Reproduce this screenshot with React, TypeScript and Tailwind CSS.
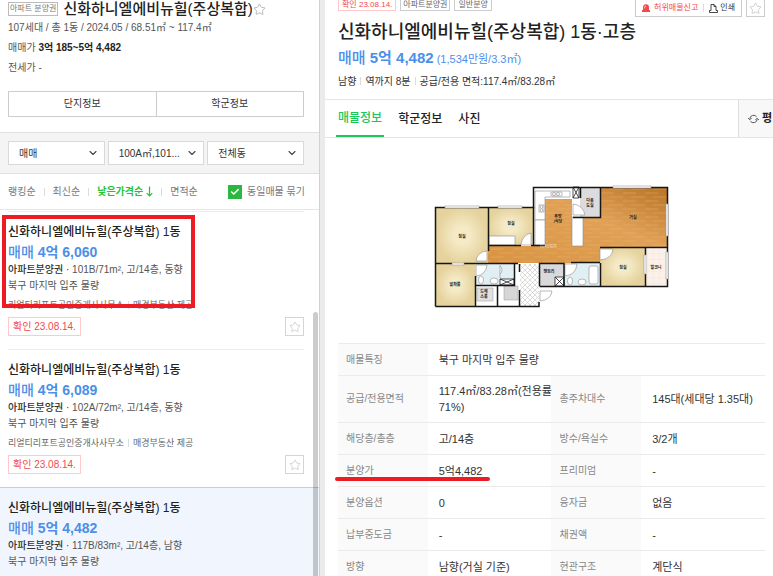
import React from 'react';
import { Star, ChevronDown, Check } from 'lucide-react';

interface Listing {
  id: string;
  price: string;
  spec: string;
  highlighted?: boolean;
  selected?: boolean;
}

const complexName = '신화하니엘에비뉴힐(주상복합)';

const listings: Listing[] = [
  { id: 'a', price: '4억 6,060', spec: '101B/71m², 고/14층, 동향', highlighted: true },
  { id: 'b', price: '4억 6,089', spec: '102A/72m², 고/14층, 동향' },
  { id: 'c', price: '5억 4,482', spec: '117B/83m², 고/14층, 남향', selected: true },
];

const detailRows: [string, string, string, string][] = [
  ['해당층/총층', '고/14층', '방수/욕실수', '3/2개'],
  ['분양가', '5억4,482', '프리미엄', '-'],
  ['분양옵션', '0', '융자금', '없음'],
  ['납부중도금', '-', '채권액', '-'],
  ['방향', '남향(거실 기준)', '현관구조', '계단식'],
];

const Divider: React.FC = () => <span className="h-2 w-px bg-[#dcdcdc]" />;

const FilterSelect: React.FC<{ label: string; value: string }> = ({ label, value }) => (
  <div className="relative flex-1">
    <select
      aria-label={label}
      className="block h-6 w-full appearance-none rounded-none border border-[#d9d9d9] bg-white pl-[10px] text-[10px] text-[#333]"
    >
      <option>{value}</option>
    </select>
    <ChevronDown size={12} strokeWidth={2.2} className="pointer-events-none absolute right-[6px] top-[6px] text-[#444]" />
  </div>
);

const ComplexHeader: React.FC = () => (
  <header className="pb-[15px] pl-2 pr-[15px] text-[10px] leading-5 text-[#555]">
    <div className="flex h-[18px] items-center">
      <span className="flex h-[14px] items-center border border-[#bbb] px-px text-[8px] text-[#777]">아파트 분양권</span>
      <h1 className="ml-[5px] text-[15px] font-medium text-[#222]">{complexName}</h1>
      <button aria-label="관심단지">
        <Star size={13} strokeWidth={1.5} className="text-[#aaa]" />
      </button>
    </div>
    <p>107세대 / 총 1동 / 2024.05 / 68.51㎡ ~ 117.4㎡</p>
    <p>
      매매가 <strong className="text-[#222]">3억 185~5억 4,482</strong>
    </p>
    <p>전세가 -</p>
    <div className="mt-[13px] flex h-[26px] border border-[#ccc] text-[#333]">
      <button className="flex-1 border-r border-[#ccc]">단지정보</button>
      <button className="flex-1">학군정보</button>
    </div>
  </header>
);

const SortBar: React.FC = () => (
  <div className="flex h-9 items-center gap-2 border-b border-[#e5e5e5] pl-2 pr-[14px] text-[10px] text-[#777]">
    <button>랭킹순</button>
    <Divider />
    <button>최신순</button>
    <Divider />
    <button className="flex items-center gap-[3px] font-bold text-[#1ec531]">
      낮은가격순
      <svg width="7" height="11" viewBox="0 0 7 11" fill="none" stroke="currentColor" strokeWidth="1.2">
        <path d="M3.5 0.5V10M0.7 7.2L3.5 10L6.3 7.2" />
      </svg>
    </button>
    <Divider />
    <button>면적순</button>
    <label className="ml-auto flex items-center gap-[5px]">
      <span className="relative size-[14px]">
        <input type="checkbox" defaultChecked className="block size-[14px] appearance-none bg-[#2db742]" />
        <Check size={10} strokeWidth={3.5} className="pointer-events-none absolute left-[2px] top-[2px] text-white" />
      </span>
      동일매물 묶기
    </label>
  </div>
);

const ListingCard: React.FC<{ listing: Listing }> = ({ listing }) => (
  <li className={listing.selected ? 'relative border-t border-[#b9d2ec] bg-[#f1f6fe]' : 'relative'}>
    <div className={listing.selected ? 'pl-2 pr-[15px]' : 'ml-2 mr-[15px] border-t border-[#ececec]'}>
      <h3 className="pt-[10px] text-[12px] font-medium leading-5 text-[#222]">{complexName} 1동</h3>
      <p className="text-[14px] font-bold leading-5 text-[#4b8fe8]">
        <span className="font-medium">매매</span> {listing.price}
      </p>
      <p className="text-[10px] leading-4 text-[#555]">
        <span className="font-medium text-[#333]">아파트분양권 ·</span> {listing.spec}
      </p>
      <p className="text-[10px] leading-4 text-[#555]">북구 마지막 입주 물량</p>
      <p className="mt-[3px] flex items-center gap-1 text-[9px] leading-4 text-[#666]">
        리얼티리포트공인중개사사무소
        <Divider />
        매경부동산 제공
      </p>
      <div className="mt-1 flex items-center justify-between pb-[13px]">
        <span className="flex h-[19px] items-center border border-[#ffc9cb] px-1 text-[10px] text-[#f5484e]">확인 23.08.14.</span>
        <button aria-label="관심매물" className="flex size-[19px] items-center justify-center border border-[#d5d5d5] bg-white">
          <Star size={12} strokeWidth={1.5} className="text-[#c4c4c4]" />
        </button>
      </div>
    </div>
    {listing.highlighted && (
      <div className="pointer-events-none absolute left-[2px] top-1 h-[93px] w-[193px] border-4 border-[#ed1c24]" />
    )}
  </li>
);

const FloorPlan: React.FC = () => (
  <svg viewBox="1 0 252 140" className="mx-auto block w-[252px]" role="img" aria-label="평면도">
    <defs>
      <radialGradient id="room">
        <stop offset="0.3" stopColor="#f5eac6" />
        <stop offset="1" stopColor="#e5d29c" />
      </radialGradient>
      <linearGradient id="wood" x1="0" y1="1" x2="1" y2="0">
        <stop offset="0" stopColor="#d99442" />
        <stop offset="0.6" stopColor="#e0a157" />
        <stop offset="1" stopColor="#b87327" />
      </linearGradient>
      <pattern id="planks" width="22" height="8" patternUnits="userSpaceOnUse">
        <path d="M0 2H13M8 6H22" stroke="#f0bd78" strokeWidth="0.7" opacity="0.5" />
      </pattern>
      <pattern id="tiles" width="5" height="5" patternUnits="userSpaceOnUse">
        <rect width="5" height="5" fill="#fff" />
        <path d="M0 0L5 5M5 0L0 5" stroke="#c4c4c4" strokeWidth="0.6" />
      </pattern>
      <pattern id="balcony" width="6" height="6" patternUnits="userSpaceOnUse">
        <rect width="6" height="6" fill="#fbf1e8" />
        <path d="M0 0H6M0 0V6" stroke="#eadfd4" strokeWidth="0.6" />
      </pattern>
    </defs>

    {/* floors */}
    <rect x="11" y="32" width="52" height="57" fill="url(#room)" />
    <rect x="11" y="89" width="39" height="42" fill="url(#room)" />
    <rect x="63" y="32" width="45" height="38" fill="url(#room)" />
    <rect x="175" y="72" width="45" height="39" fill="url(#room)" />
    <rect x="220" y="74" width="22" height="37" fill="url(#balcony)" />
    <rect x="108" y="12" width="47" height="59" fill="#fff" />
    <path d="M63 71H120V24H147V42H175V12H242V72H175V88H63Z" fill="url(#wood)" />
    <path d="M63 71H120V24H147V42H175V12H242V72H175V88H63Z" fill="url(#planks)" />
    <rect x="155" y="12" width="20" height="30" fill="#dcdcde" />
    <rect x="50" y="89" width="39" height="21" fill="#dfeff3" />
    <rect x="139" y="88" width="36" height="23" fill="#dfeff3" />
    <rect x="95" y="89" width="19" height="42" fill="url(#tiles)" />
    <rect x="115" y="88" width="24" height="23" fill="#d9d9db" />
    <rect x="50" y="111" width="22" height="20" fill="#fff" />
    <rect x="52" y="113" width="16" height="13" fill="#e1e1e1" stroke="#999" strokeWidth="0.5" />
    <rect x="79" y="111" width="14" height="14" fill="#d6d6d8" stroke="#999" strokeWidth="0.5" />

    {/* fixtures and doors */}
    <g fill="#fff" stroke="#8b8b8b" strokeWidth="0.6">
      <rect x="147" y="42" width="11" height="29" />
      <rect x="64" y="61" width="26" height="9" />
      <path d="M110 16H145V22H120V45H110Z" />
      <path d="M110 45H120V70H110Z" />
      <rect x="126" y="17" width="11" height="4" rx="1" />
      <circle cx="129" cy="19" r="1.5" />
      <circle cx="133" cy="19" r="1.5" />
      <rect x="114" y="30" width="5" height="7" />
      <circle cx="116.5" cy="32" r="1.4" />
      <circle cx="116.5" cy="35" r="1.4" />
      <path d="M62 86V76Q52 77 51 86Z" />
      <path d="M106 70V58Q97 60 96 70Z" />
      <path d="M148 29V40H160Q158 30 148 29Z" />
      <path d="M175 74H188Q187 84 175 85Z" />
      <path d="M51 90H62Q61 100 51 101Z" />
      <path d="M140 89H152Q151 100 140 101Z" />
      <path d="M115 116H127Q126 125 115 126Z" />
      <path d="M75 90V103M75 91Q79 95 75 99" />
      <ellipse cx="56" cy="105" rx="2.5" ry="4" />
      <ellipse cx="69" cy="106" rx="4" ry="3" />
      <ellipse cx="145" cy="106" rx="2.5" ry="4" />
      <ellipse cx="157" cy="107" rx="4" ry="3" />
      <rect x="164" y="91" width="9" height="18" rx="2" />
    </g>
    <g fill="#fff" stroke="#222" strokeWidth="0.8">
      <path d="M148 12H154V23H148ZL154 23M154 12L148 23" />
      <path d="M75 104H89V110H75ZL89 110M89 104L75 110" />
      <path d="M130 102H139V111H130ZL139 111M139 102L130 111" />
    </g>

    {/* walls */}
    <g fill="none" stroke="#161616" strokeWidth="1.5">
      <path d="M10.5 131.5V32.5H108.5V12.5H242.5V111.5H114.5" />
      <path d="M10.5 131.5H114V127M114.5 111V88" />
      <path d="M10.5 88.5H27M39 88.5H93M63.5 32V76M63 70.5H96M106 70.5H120M108.5 32V70" />
      <path d="M50.5 101V131M50 110.5H89.5V88M72.5 111V131M94.5 89V97M94.5 115V131" />
      <path d="M155.5 12V23M155 42.5H175.5V12M158 42.5H148" />
      <path d="M175.5 88V111M175 72.5H242M220.5 73V80M220.5 99V111M114 88.5H139V111M146 87.5H175" />
    </g>
    <g fill="#fff" stroke="#999" strokeWidth="0.6">
      <rect x="20" y="31" width="34" height="2" />
      <rect x="73" y="31" width="24" height="2" />
      <rect x="188" y="11" width="38" height="2" />
      <rect x="241" y="29" width="2" height="32" />
      <rect x="241" y="77" width="2" height="27" />
      <rect x="219" y="80" width="2" height="19" />
      <rect x="27" y="88" width="12" height="2" />
    </g>

    <text x="115" y="73" fontSize="5" fill="#fff" opacity="0.5">NAVER</text>
    <g fontSize="4" fontWeight="700" fill="#222" textAnchor="middle">
      <text x="37" y="63">침실</text>
      <text x="86" y="50">침실</text>
      <text x="30" y="111">알파룸</text>
      <text x="59" y="118">드레</text>
      <text x="59" y="123">스룸</text>
      <text x="133" y="43">주방</text>
      <text x="133" y="48">/식당</text>
      <text x="165" y="27">다용</text>
      <text x="165" y="32">도실</text>
      <text x="208" y="44">거실</text>
      <text x="124" y="98">팬트리</text>
      <text x="198" y="94">침실</text>
      <text x="231" y="94">발코니</text>
    </g>
  </svg>
);

const LabelCell: React.FC<{ children: React.ReactNode }> = ({ children }) => (
  <th scope="row" className="bg-[#fafafa] pl-2 text-left text-[10px] font-normal text-[#888]">{children}</th>
);

const ValueCell: React.FC<{ children: React.ReactNode; colSpan?: number }> = ({ children, colSpan }) => (
  <td colSpan={colSpan} className="whitespace-nowrap pl-[11px] text-[#333]">{children}</td>
);

const DetailTable: React.FC = () => (
  <table className="w-full table-fixed border-collapse border-t border-[#ebebeb] text-[11px] leading-4">
    <colgroup>
      <col className="w-[21%]" />
      <col className="w-[29%]" />
      <col className="w-[21%]" />
      <col className="w-[29%]" />
    </colgroup>
    <tbody>
      <tr className="h-8 border-b border-[#ebebeb]">
        <LabelCell>매물특징</LabelCell>
        <ValueCell colSpan={3}>북구 마지막 입주 물량</ValueCell>
      </tr>
      <tr className="h-[47px] border-b border-[#ebebeb]">
        <LabelCell>공급/전용면적</LabelCell>
        <ValueCell>
          117.4㎡/83.28㎡(전용률
          <br />
          71%)
        </ValueCell>
        <LabelCell>총주차대수</LabelCell>
        <ValueCell>145대(세대당 1.35대)</ValueCell>
      </tr>
      {detailRows.map(([label, value, label2, value2]) => (
        <tr key={label} className="relative h-8 border-b border-[#ebebeb]">
          <LabelCell>
            {label}
            {label === '분양가' && (
              <span className="absolute -left-[3px] bottom-[5px] h-1 w-[155px] rounded-full bg-[#ed1c24]" />
            )}
          </LabelCell>
          <ValueCell>{value}</ValueCell>
          <LabelCell>{label2}</LabelCell>
          <ValueCell>{value2}</ValueCell>
        </tr>
      ))}
    </tbody>
  </table>
);

const DetailHeader: React.FC = () => (
  <header className="pb-2 pl-[13px] pr-2">
    <div className="flex h-[18px] items-start justify-between text-[8px]">
      <div className="flex gap-1 leading-[10px] text-[#666]">
        <span className="border border-t-0 border-[#ffc9cb] px-[3px] text-[#f5484e]">확인 23.08.14.</span>
        <span className="border border-t-0 border-[#ccc] px-[2px]">아파트분양권</span>
        <span className="border border-t-0 border-[#ccc] px-[3px]">일반분양</span>
      </div>
      <div className="flex gap-1">
        <div className="flex h-[17px] items-center gap-[5px] border border-t-0 border-[#ccc] px-[6px]">
          <button className="flex items-center gap-1 text-[#f5484e]">
            <svg width="8" height="8" viewBox="0 0 8 8" fill="currentColor" className="shrink-0">
              <path d="M1 6V3.2A3 3 0 0 1 7 3.2V6H8V8H0V6Z" />
              <path d="M2.6 4.5V3.4A1.4 1.4 0 0 1 4 2" fill="none" stroke="#fff" strokeWidth="0.7" />
            </svg>
            허위매물신고
          </button>
          <Divider />
          <button className="flex items-center gap-[2px] text-[#333]">
            <svg width="9" height="9" viewBox="0 0 9 9" fill="none" stroke="currentColor" strokeWidth="0.9" className="shrink-0">
              <path d="M2 6.5V0.5H5L7 2.5V6.5M5 0.5V2.5H7M2 6.5H0.5V8.5H8.5V6.5H7" />
            </svg>
            인쇄
          </button>
        </div>
        <button aria-label="관심매물" className="flex h-[17px] w-[19px] items-center justify-center border border-t-0 border-[#ccc]">
          <Star size={13} strokeWidth={1.5} className="text-[#c4c4c4]" />
        </button>
      </div>
    </div>
    <h2 className="text-[18px] font-medium leading-7 text-[#222]">{complexName} 1동·고층</h2>
    <p className="text-[11px] leading-6 text-[#4b8fe8]">
      <strong className="text-[15px]">
        <span className="font-medium">매매</span> 5억 4,482
      </strong>{' '}
      (1,534만원/3.3㎡)
    </p>
    <p className="flex h-5 items-center gap-1 text-[10px] text-[#333]">
      남향
      <Divider />
      역까지 8분
      <Divider />
      공급/전용 면적:117.4㎡/83.28㎡
    </p>
  </header>
);

const DetailTabs: React.FC = () => (
  <nav className="flex h-[39px] border-y border-[#e5e5e5] pl-[11px] text-[12px] font-medium text-[#222]">
    <button className="border-b-2 border-[#1ec55a] px-[2px] text-[#1ec55a]">매물정보</button>
    <button className="ml-3 px-[2px]">학군정보</button>
    <button className="ml-3 px-[2px]">사진</button>
    <button className="ml-auto flex items-center gap-[3px] border-l border-[#ddd] bg-[#f8f8f8] pl-[9px] pr-px text-[11px] font-bold">
      <svg width="11" height="10" viewBox="0 0 11 10" fill="none" stroke="#555" className="shrink-0">
        <path d="M1.8 4.6A3.8 3.8 0 0 1 8.6 2.8M9.2 5.4A3.8 3.8 0 0 1 2.4 7.2" />
        <path d="M0 3.8L1.8 5.8L3.7 3.9M7.300 6.1L9.200 4.2L11 6.2" />
      </svg>
      평
    </button>
  </nav>
);

export default function App() {
  return (
    <div className="flex h-screen overflow-hidden bg-white font-['Liberation_Sans','Noto_Sans_CJK_KR',sans-serif]">
      <aside className="relative flex w-[320px] shrink-0 flex-col border-r border-[#d2d2d2]">
        <ComplexHeader />
        <div className="flex gap-[3px] border-y border-[#e0e0e0] bg-[#f4f4f4] py-2 pl-2 pr-[15px]">
          <FilterSelect label="거래방식" value="매매" />
          <FilterSelect label="면적" value="100A㎡,101..." />
          <FilterSelect label="동" value="전체동" />
        </div>
        <SortBar />
        <ul className="min-h-0 flex-1 overflow-hidden pt-px">
          {listings.map((listing) => (
            <ListingCard key={listing.id} listing={listing} />
          ))}
        </ul>
        <div className="absolute bottom-0 right-px top-[312px] w-[5px] rounded-t-full bg-black/20" />
      </aside>
      <div className="w-[5px] shrink-0 bg-[#ebebeb]" />
      <main className="min-w-0 flex-1">
        <DetailHeader />
        <DetailTabs />
        <section className="pb-7 pl-[13px] pr-2 pt-[37px]">
          <FloorPlan />
        </section>
        <section className="pl-[13px] pr-2">
          <DetailTable />
        </section>
      </main>
    </div>
  );
}
